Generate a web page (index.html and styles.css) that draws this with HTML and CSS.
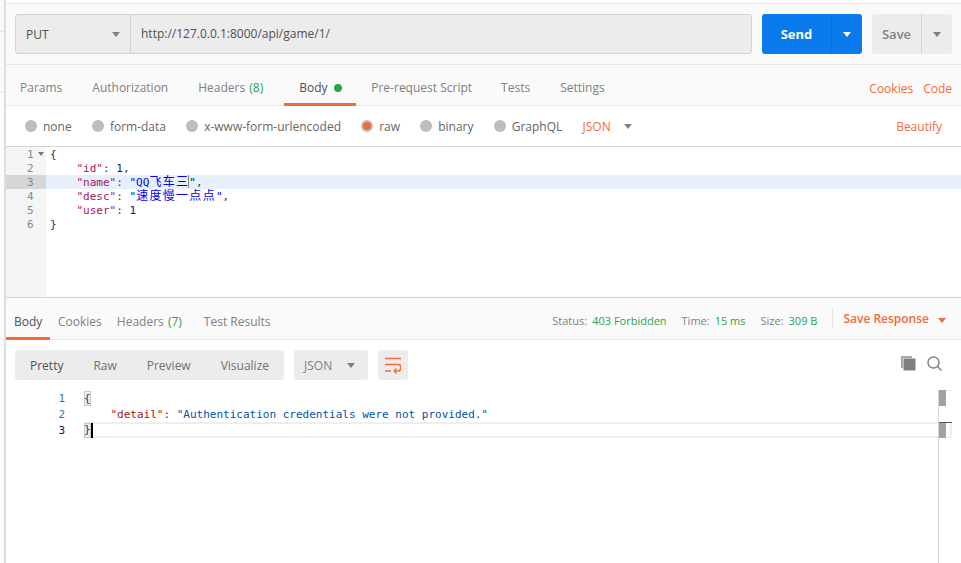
FILE: index.html
```html
<!DOCTYPE html>
<html lang="en">
<head>
<meta charset="utf-8">
<title>Postman</title>
<link rel="stylesheet" href="styles.css">
</head>
<body>
<div class="app">
  <aside class="strip"><div class="strip-a"></div><div class="strip-b"></div></aside>
  <main class="main">
    <section class="urlbar">
      <div class="urlgroup">
        <div class="method"><span>PUT</span><i class="caret grey"></i></div>
        <div class="url">http://127.0.0.1:8000/api/game/1/</div>
      </div>
      <div class="send"><span class="send-label">Send</span><span class="send-drop"><i class="caret white"></i></span></div>
      <div class="save"><span class="save-label">Save</span><span class="save-drop"><i class="caret grey"></i></span></div>
    </section>
    <nav class="tabs">
      <span class="tab">Params</span>
      <span class="tab">Authorization</span>
      <span class="tab">Headers <em>(8)</em></span>
      <span class="tab active">Body<b class="dot"></b></span>
      <span class="tab">Pre-request Script</span>
      <span class="tab">Tests</span>
      <span class="tab">Settings</span>
      <span class="links"><a>Cookies</a><a>Code</a></span>
    </nav>
    <section class="options">
      <label class="radio"><i></i>none</label>
      <label class="radio"><i></i>form-data</label>
      <label class="radio"><i></i>x-www-form-urlencoded</label>
      <label class="radio on"><i></i>raw</label>
      <label class="radio"><i></i>binary</label>
      <label class="radio"><i></i>GraphQL</label>
      <span class="json">JSON</span><i class="caret grey"></i>
      <a class="beautify">Beautify</a>
    </section>
    <section class="editor">
      <div class="gutter">
        <div class="gl">1<i class="fold"></i></div>
        <div class="gl">2</div>
        <div class="gl act">3</div>
        <div class="gl">4</div>
        <div class="gl">5</div>
        <div class="gl">6</div>
      </div>
      <div class="code">
        <div class="cl">{</div>
        <div class="cl">    <span class="k">"id"</span>: <span class="n">1</span>,</div>
        <div class="cl act">    <span class="k">"name"</span>: <span class="s">"QQ<span class="cjk">飞车三</span><span class="cur"></span>"</span>,</div>
        <div class="cl">    <span class="k">"desc"</span>: <span class="s">"<span class="cjk">速度慢一点点</span>"</span>,</div>
        <div class="cl">    <span class="k">"user"</span>: <span class="n">1</span></div>
        <div class="cl">}</div>
      </div>
    </section>
    <nav class="restabs">
      <span class="rtab active">Body</span>
      <span class="rtab">Cookies</span>
      <span class="rtab">Headers <em>(7)</em></span>
      <span class="rtab">Test Results</span>
      <div class="meta">
        <span>Status:</span><em class="v1">403 Forbidden</em>
        <span>Time:</span><em class="v1">15 ms</em>
        <span>Size:</span><em class="v2">309 B</em>
        <a class="saveresp">Save Response<i class="caret orange"></i></a>
      </div>
    </nav>
    <section class="toolbar">
      <div class="modes"><span>Pretty</span><span>Raw</span><span>Preview</span><span>Visualize</span></div>
      <div class="fmt">JSON<i class="caret grey"></i></div>
      <div class="wrap">
        <svg class="wrap-icon" width="16" height="17" viewBox="0 0 16 17" fill="none" stroke="#f26b3a" stroke-width="1.7">
          <path d="M0 1.500h16M0 7.500h13.500c3 0 3 6.500 0 6.500H9M0 14h6"/>
          <path d="M11.500 11.500L9 14l2.500 2.500" stroke-width="1.300"/>
        </svg>
      </div>
      <div class="tools">
        <svg width="15" height="15" viewBox="0 0 15 15"><path d="M0 0h11v2H2v10H0z" fill="#a9a9a9"/><rect x="2.500" y="2.500" width="12" height="12" fill="#808080"/></svg>
        <svg width="15" height="15" viewBox="0 0 15 15" fill="none" stroke="#808080" stroke-width="1.400"><circle cx="6.500" cy="6.500" r="5.500"/><path d="M10.500 10.500l4 4"/></svg>
      </div>
    </section>
    <section class="response">
      <div class="rgutter"><div>1</div><div>2</div><div class="dark">3</div></div>
      <div class="rcode">
        <div class="rl"><span class="br">{</span></div>
        <div class="rl">    <span class="rk">"detail"</span>: <span class="rs">"Authentication credentials were not provided."</span></div>
        <div class="rl ract"><span class="br">}</span><span class="caretbar"></span></div>
      </div>
      <div class="rail">
        <i class="thumb t1"></i><i class="mark"></i><i class="thumb t2"></i><i class="mini"></i>
      </div>
    </section>
  </main>
</div>
</body>
</html>
```
FILE: styles.css
```css
* { box-sizing: border-box; }
html, body { margin: 0; height: 100%; overflow: hidden; background: #fff; }
body { font-family: "Open Sans", "Noto Sans", sans-serif; font-size: 12px; color: #808080; }
em { font-style: normal; color: #26a651; }
a { color: #f26b3a; }

.app { display: flex; width: 961px; height: 563px; }
.strip { width: 6px; flex: none; background: #fdfdfd; border-right: 2px solid #dedede; }
.strip-a { height: 32px; background: #f7f7f7; border-bottom: 1px solid #e6e6e6; }
.strip-b { height: 61px; background: #fafafa; border-bottom: 1px solid #e6e6e6; }
.main { flex: 1; min-width: 0; display: flex; flex-direction: column; padding-top: 3px; }

.urlbar { height: 62px; flex: none; display: flex; padding: 10px 9px; background: #fafafa; border-top: 1px solid #e8e8e8; border-bottom: 1px solid #e8e8e8; }
.urlgroup { display: flex; width: 737px; height: 40px; background: #ececec; border: 1px solid #d4d4d4; border-radius: 3px; }
.method { width: 115px; display: flex; align-items: center; justify-content: space-between; padding: 0 10px; border-right: 1px solid #d4d4d4; color: #505050; font-size: 12px; }
.url { padding-left: 10px; line-height: 37px; color: #505050; font-size: 12px; }
.caret { display: inline-block; width: 0; height: 0; border-left: 4.500px solid transparent; border-right: 4.500px solid transparent; border-top: 5px solid #808080; }
.caret.white { border-top-color: #fff; }
.caret.orange { border-top-color: #f26b3a; margin-left: 9px; }
.send { margin-left: 10px; width: 100px; height: 40px; display: flex; background: #097bed; border-radius: 3px; color: #fff; font-weight: 700; font-size: 13px; }
.send-label { flex: 1; text-align: center; line-height: 40px; border-right: 1px solid #0a6fd6; }
.send-drop { width: 30px; display: flex; align-items: center; justify-content: center; }
.save { margin-left: 10px; width: 80px; height: 40px; display: flex; background: #ececec; border-radius: 3px; color: #808080; font-weight: 600; font-size: 13px; }
.save-label { flex: 1; text-align: center; line-height: 40px; border-right: 1px solid #d4d4d4; }
.save-drop { width: 30px; display: flex; align-items: center; justify-content: center; }

.tabs { height: 41px; flex: none; display: flex; align-items: stretch; background: #fafafa; border-bottom: 1px solid #e8e8e8; padding-left: 14px; color: #808080; }
.tab { line-height: 45px; padding: 0 15px 0 0; margin-right: 15px; white-space: nowrap; font-size: 12px; }
.tab em { margin-left: 1px; }
.tab.active { width: 72px; margin: 0 15px 0 -9px; padding: 0 0 0 15px; color: #505050; border-bottom: 3px solid #f26b3a; height: 41px; }
.tab:nth-child(5) { margin-right: 14px; }
.dot { display: inline-block; width: 8px; height: 8px; border-radius: 50%; background: #26a651; margin-left: 6px; }
.links { margin-left: auto; padding-right: 9px; display: flex; gap: 10px; line-height: 47px; }

.options { height: 41px; flex: none; display: flex; align-items: center; padding-left: 19px; border-bottom: 1px solid #d4d4d4; color: #666; }
.radio { display: flex; align-items: center; margin-right: 20.200px; }
.radio i { width: 12px; height: 12px; border-radius: 50%; background: #bdbdbd; margin-right: 6px; }
.radio.on i { background: #f26b3a; border: 2px solid #bdbdbd; }
.json { color: #f26b3a; margin-right: 13.500px; }
.beautify { margin-left: auto; padding-right: 19px; }

.editor { height: 151px; flex: none; display: flex; border-bottom: 1px solid #d4d4d4; font: 11px/15px "DejaVu Sans Mono", monospace; }
.gutter { width: 40px; flex: none; background: #f5f5f5; color: #888; }
.gl { height: 14px; padding-left: 21px; position: relative; }
.gl.act { background: #d6d6d6; }
.fold { position: absolute; left: 32px; top: 5px; width: 0; height: 0; border-left: 3px solid transparent; border-right: 3px solid transparent; border-top: 4px solid #777; }
.code { flex: 1; color: #333; }
.cl { height: 14px; padding-left: 4px; white-space: pre; }
.cl.act { background: #e5f0fb; }
.k { color: #a31566; }
.n { color: #11117a; }
.s { color: #0000ee; }
.cjk { font-family: "Noto Sans CJK SC", sans-serif; font-size: 12px; line-height: 1; letter-spacing: 1.300px; }
.cur { display: inline-block; width: 1px; height: 13px; background: #888; vertical-align: -2px; margin-left: -1px; }

.restabs { height: 42px; flex: none; display: flex; background: #fafafa; border-bottom: 1px solid #e8e8e8; }
.rtab { line-height: 47px; padding: 0 8px; white-space: nowrap; }
.rtab:nth-child(3) { margin-left: -1px; }
.rtab:nth-child(3) em { margin-left: 1px; }
.rtab:nth-child(4) { margin-left: 6px; }
.rtab.active { color: #505050; width: 44px; border-bottom: 3px solid #f26b3a; height: 42px; }
.meta { margin-left: auto; display: flex; align-items: center; font-size: 11px; padding-right: 15px; height: 41px; padding-top: 4px; }
.meta span { margin-right: 5px; }
.meta em { margin-right: 15px; }
.meta .v2 { margin-right: 15px; }
.saveresp { font-weight: 600; font-size: 12px; border-left: 1px solid #e4e4e4; padding-left: 10px; height: 20px; line-height: 19px; margin-top: -3px; white-space: nowrap; }

.toolbar { height: 50px; flex: none; display: flex; padding: 10px 9px; }
.modes { width: 269px; height: 30px; background: #ececec; border-radius: 3px; display: flex; align-items: center; justify-content: space-between; padding: 0 15px; color: #707070; }
.modes span:first-child { color: #505050; }
.fmt { margin-left: 10px; width: 74px; height: 30px; background: #ececec; border-radius: 3px; display: flex; align-items: center; justify-content: space-between; padding: 0 13px 0 10px; }
.wrap { margin-left: 10px; width: 30px; height: 30px; background: #ececec; border-radius: 3px; display: flex; align-items: center; justify-content: center; }
.wrap-icon { margin-top: 1px; }
.tools { margin-left: auto; display: flex; gap: 11px; align-items: flex-start; padding: 6px 10px 0 0; }

.response { flex: 1; min-height: 0; display: flex; position: relative; font: 11px/17px "DejaVu Sans Mono", monospace; }
.rgutter { width: 59px; flex: none; text-align: right; color: #2a7ab0; }
.rgutter div { height: 16px; }
.rgutter .dark { color: #11117a; }
.rcode { width: 854px; flex: none; margin-left: 19px; }
.rl { height: 16px; white-space: pre; color: #333; }
.ract { border-top: 2px solid #eee; border-bottom: 2px solid #eee; line-height: 12px; }
.br { display: inline-block; width: 7px; height: 15px; line-height: 16px; background: #f0f0f0; outline: 1px solid #c8c8c8; outline-offset: -1px; }
.ract .br { height: 15px; line-height: 14px; vertical-align: top; margin-top: -1px; }
.caretbar { display: inline-block; width: 2px; height: 15px; background: #000; vertical-align: top; margin-top: -1px; }
.rk { color: #a31515; }
.rs { color: #0451a5; }
.rail { position: absolute; left: 932px; top: 0; bottom: 0; width: 14px; border-left: 1px solid #d4d4d4; background: linear-gradient(#eee, #eee) no-repeat 7px 0 / 7px 1px; }
.thumb { position: absolute; left: 0; width: 7px; background: #a2a2a2; }
.t1 { top: 0; height: 16px; }
.t2 { top: 33px; height: 15px; }
.mark { position: absolute; left: 0; right: 0; top: 32px; height: 1px; background: #555; }
.mini { position: absolute; left: 7px; right: 0; top: 33px; height: 15px; border-right: 2px solid #eee; border-bottom: 1px solid #eee; }
```
